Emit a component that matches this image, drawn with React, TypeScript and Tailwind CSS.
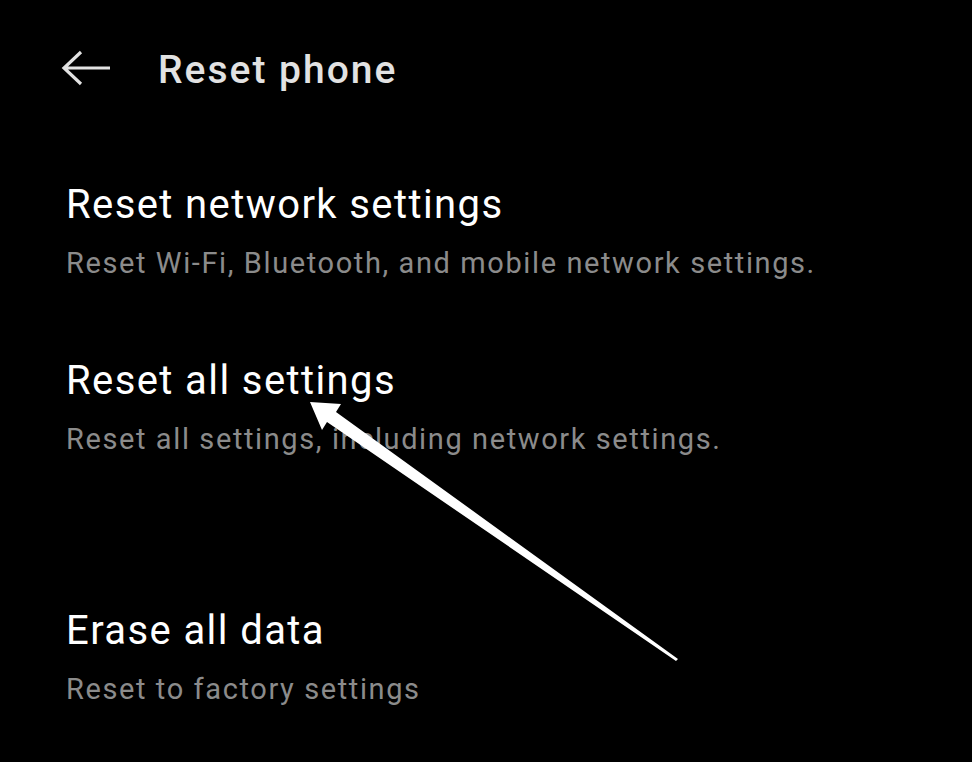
import * as React from "react";

const items = [
  { title: "Reset network settings", sub: "Reset Wi-Fi, Bluetooth, and mobile network settings.", mt: "mt-[87px]" },
  { title: "Reset all settings", sub: "Reset all settings, including network settings.", mt: "mt-[76px]" },
  { title: "Erase all data", sub: "Reset to factory settings", mt: "mt-[150px]" },
];

export default function App() {
  return (
    <div
      className="relative w-[972px] h-[762px] overflow-hidden bg-black"
      style={{ fontFamily: "Roboto, 'Noto Sans', sans-serif" }}
    >
      <header className="flex items-center h-[48px] mt-[46px]">
        <svg width="52" height="36" viewBox="0 0 52 36" className="ml-[61px] -mt-[4px]" fill="none">
          <path d="M3 18 H49 M20 2 L3 18 L20 34" stroke="#e2e2e2" strokeWidth="3.2" />
        </svg>
        <h1 className="ml-[45px] text-[39px] leading-[48px] font-medium tracking-[2px] text-[#e2e2e2]">Reset phone</h1>
      </header>

      <div className="pl-[66px]">
        {items.map((item, i) => (
          <div key={i} className={item.mt}>
            <div className="text-[40px] leading-[48px] tracking-[1.4px] text-white">{item.title}</div>
            <div className="mt-[16px] text-[29px] leading-[36px] tracking-[1.6px] text-[#8b8b8b]">{item.sub}</div>
          </div>
        ))}
      </div>

      {/* annotation arrow */}
      <svg className="absolute left-0 top-0 pointer-events-none" width="972" height="762" viewBox="0 0 972 762">
        <polygon
          points="310,402 341,404 336,412 678,659 676,661 327,422 322,430"
          fill="#ffffff"
        />
      </svg>
    </div>
  );
}
